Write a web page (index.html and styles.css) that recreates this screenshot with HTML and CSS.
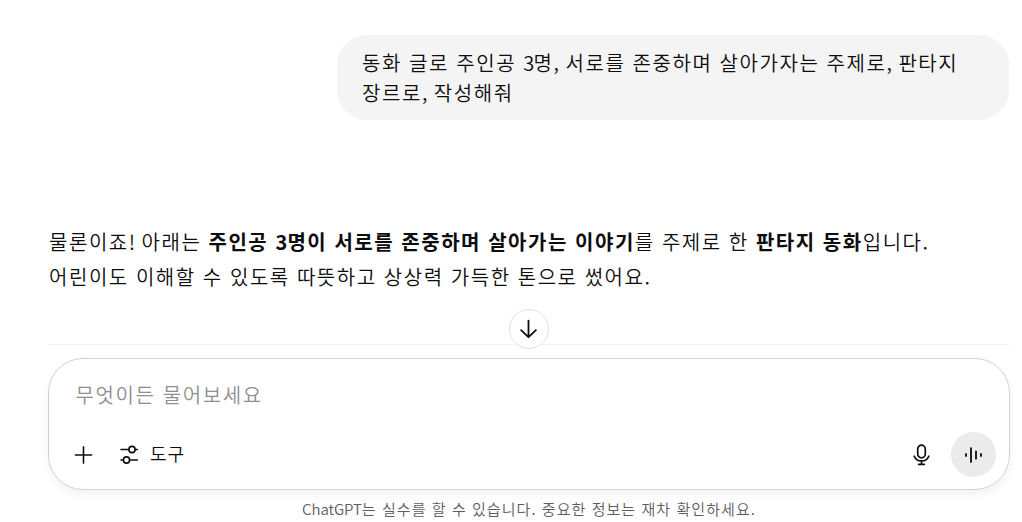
FILE: index.html
```html
<!DOCTYPE html>
<html lang="ko">
<head>
<meta charset="utf-8">
<title>ChatGPT</title>
<link rel="stylesheet" href="styles.css">
</head>
<body>
<main class="chat">
  <div class="user-message">동화 글로 주인공 <span class="tight">3</span>명<span class="tight">,</span> 서로를 존중하며 살아가자는 주제로<span class="tight">,</span> 판타지<br>장르로<span class="tight">,</span> 작성해줘</div>
  <div class="reply">물론이죠<span class="tight">!</span> 아래는 <strong>주인공 <span class="tight">3</span>명이 서로를 존중하며 살아가는 이야기</strong>를 주제로 한 <strong>판타지 동화</strong>입니다.<br>어린이도 이해할 수 있도록 따뜻하고 상상력 가득한 톤으로 썼어요.</div>
  <div class="divider">
    <button class="scroll-down" aria-label="아래로 스크롤">
      <svg width="20" height="20" viewBox="0 0 20 20" fill="none" stroke="currentColor" stroke-width="1.8" stroke-linecap="round" stroke-linejoin="round"><path d="M9.500 1.600v16.600M2.100 11.100l7.400 7.100 7.400-7.100"/></svg>
    </button>
  </div>
  <section class="composer">
    <div class="placeholder">무엇이든 물어보세요</div>
    <div class="toolbar">
      <svg class="plus" width="20" height="20" viewBox="0 0 20 20" fill="none" stroke="currentColor" stroke-width="1.6" stroke-linecap="round"><path d="M10.500 1.900v16.200M2.400 10h16.200"/></svg>
      <svg class="sliders" width="20" height="20" viewBox="0 0 20 20" fill="none" stroke="currentColor" stroke-width="1.6" stroke-linecap="round"><path d="M2 4.500h7.500M16.500 4.500h1.900M2 15h1.800M10.500 15h7.900"/><circle cx="13" cy="4.500" r="3.100"/><circle cx="7.500" cy="15" r="3.100"/></svg>
      <span class="tools-label">도구</span>
      <svg class="mic" width="18" height="22" viewBox="0 0 18 22" fill="none" stroke="currentColor" stroke-width="1.7" stroke-linecap="round"><rect x="5.700" y="1.200" width="7.600" height="12.600" rx="3.800"/><path d="M2.200 12.200c1.200 2.900 4 4.700 7.300 4.700s6.100-1.800 7.300-4.700M9.500 17v3.400M6.700 20.400h5.600"/></svg>
      <button class="voice" aria-label="음성">
        <svg width="20" height="20" viewBox="0 0 20 20" fill="none" stroke="currentColor" stroke-width="1.8" stroke-linecap="round"><path d="M2 8.900v2.200M7 3.100v13.800M12 6.300v7.400M17 8.900v2.200"/></svg>
      </button>
    </div>
  </section>
  <footer class="notice"><span class="brand">ChatGPT</span>는 실수를 할 수 있습니다. 중요한 정보는 재차 확인하세요.</footer>
</main>
</body>
</html>
```
FILE: styles.css
```css
* { box-sizing: border-box; }
body {
  margin: 0;
  background: #fff;
  color: #0d0d0d;
  font-family: "Noto Sans CJK KR", sans-serif;
  overflow: hidden;
}
button { padding: 0; color: inherit; display: flex; align-items: center; justify-content: center; }
svg { display: block; flex: none; }
.chat {
  display: flex;
  flex-direction: column;
  width: 962px;
  height: 522px;
  margin-left: 48px;
  padding-top: 35px;
}
.user-message {
  align-self: flex-end;
  width: 672px;
  height: 85px;
  margin-right: 1px;
  padding: 13px 25px;
  border-radius: 30px;
  background: #f4f4f4;
  font-size: 20px;
  font-weight: 350;
  line-height: 30px;
  letter-spacing: 1.57px;
  white-space: nowrap;
}
.tight { letter-spacing: -.7px; }
.reply {
  height: 71px;
  margin-top: 104px;
  padding-left: 1px;
  font-size: 20px;
  font-weight: 350;
  line-height: 35px;
  letter-spacing: 1.54px;
  white-space: nowrap;
}
.reply strong { font-weight: 700; letter-spacing: 1.53px; }
.reply strong .tight { letter-spacing: .2px; }
.divider {
  position: relative;
  height: 1px;
  margin: 49px 1px 13px;
  background: #f0f0f0;
}
.scroll-down {
  position: absolute;
  top: -35px;
  left: 460px;
  width: 40px;
  height: 40px;
  border: 1px solid #e2e2e2;
  border-radius: 50%;
  background: #fff;
}
.composer {
  height: 132px;
  padding: 21px 13px 12px 26px;
  border: 1px solid #d2d2d2;
  border-radius: 35px;
  background: #fff;
  box-shadow: 0 5px 10px rgba(0, 0, 0, .05);
}
.placeholder {
  padding-left: .5px;
  color: #8f8f8f;
  font-size: 20px;
  font-weight: 350;
  line-height: 30px;
  letter-spacing: 1.6px;
}
.toolbar {
  display: flex;
  align-items: center;
  height: 45px;
  margin-top: 22px;
}
.plus { margin-left: -2px; }
.sliders { margin-left: 26px; }
.tools-label {
  margin: -3px 0 0 11px;
  font-size: 18px;
  font-weight: 350;
  letter-spacing: 1px;
}
.mic { margin-left: auto; }
.voice {
  width: 45px;
  height: 45px;
  margin-left: 21px;
  border: 0;
  border-radius: 50%;
  background: #ebebeb;
}
.notice {
  padding-top: 8px;
  color: #5d5d5d;
  font-size: 15px;
  font-weight: 350;
  line-height: 22px;
  letter-spacing: 1.06px;
  text-align: center;
  white-space: nowrap;
}
.brand { letter-spacing: -.1px; }
```
